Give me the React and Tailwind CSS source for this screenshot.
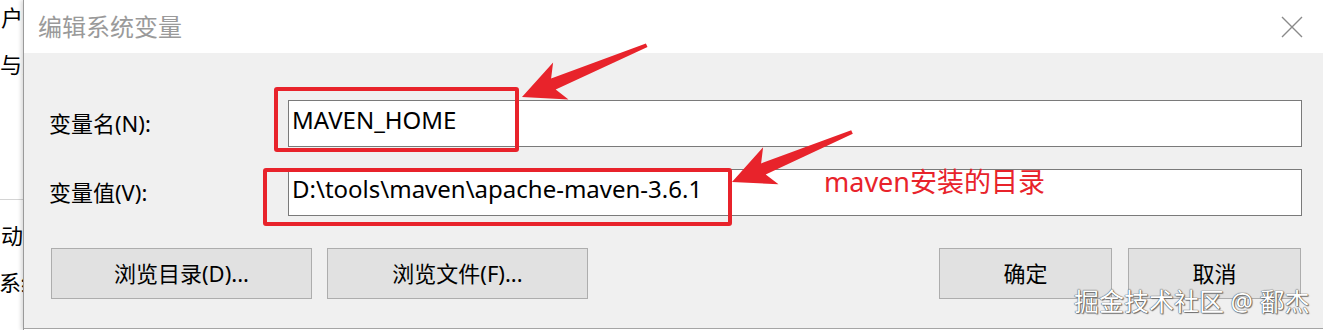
import React from 'react';

const FONT = '[font-family:"Noto_Sans","Noto_Sans_CJK_SC",sans-serif]';

function WinButton({ children, className = '' }) {
    return (
        <div className={`h-[51px] flex items-center justify-center bg-[#e1e1e1] border border-[#adadad] text-[22px] text-black ${className}`}>
            {children}
        </div>
    );
}

function Field({ label, value }) {
    return (
        <div className="flex items-center h-[47px]">
            <div className="w-[239px] shrink-0 text-[22px] text-black">{label}</div>
            <div className="flex-1 h-[47px] flex items-center bg-white border border-[#7a7a7a] pl-[3px] pb-[7px] text-[24px] text-black whitespace-nowrap">
                {value}
            </div>
        </div>
    );
}

export default function App() {
    return (
        <div className={`relative w-[1323px] h-[330px] flex overflow-hidden bg-white ${FONT}`}>
            {/* window behind the dialog */}
            <div className="w-[23px] shrink-0 flex flex-col overflow-hidden bg-white text-[22px] text-black leading-none">
                <div className="mt-[6px] flex justify-end whitespace-nowrap">用户</div>
                <div className="mt-[25px] whitespace-nowrap">与变量</div>
                <div className="mt-[124px] border-t border-[#d4d4d4]"></div>
                <div className="mt-[24px] flex justify-end whitespace-nowrap">启动</div>
                <div className="mt-[25px] whitespace-nowrap -ml-[1px]">系统</div>
            </div>

            {/* dialog */}
            <div className="flex-1 flex flex-col border-l border-[#9a9a9a] shadow-[-2px_0_4px_rgba(0,0,0,0.15)]">
                <div className="h-[53px] shrink-0 bg-white flex items-center justify-between pl-[14px] pr-[20px]">
                    <span className="text-[24px] text-[#9a9a9a]">编辑系统变量</span>
                    <svg width="22" height="22" viewBox="0 0 22 22">
                        <path d="M1 1 L21 21 M21 1 L1 21" stroke="#8a8a8a" strokeWidth="1.4" fill="none" />
                    </svg>
                </div>
                <div className="flex-1 bg-[#f0f0f0] pl-[25px] pr-[21px] pt-[47px] border-b border-[#a5a5a5] mb-[1px]">
                    <Field label="变量名(N):" value="MAVEN_HOME" />
                    <div className="mt-[22px]">
                        <Field label="变量值(V):" value="D:\tools\maven\apache-maven-3.6.1" />
                    </div>
                    <div className="mt-[32px] flex items-center">
                        <WinButton className="w-[261px] ml-[2px]">浏览目录(D)...</WinButton>
                        <WinButton className="w-[261px] ml-[15px]">浏览文件(F)...</WinButton>
                        <div className="flex-1"></div>
                        <WinButton className="w-[173px]">确定</WinButton>
                        <WinButton className="w-[173px] ml-[16px] mr-[1px]">取消</WinButton>
                    </div>
                </div>
            </div>

            {/* red annotations */}
            <div className="absolute left-[274px] top-[87px] w-[245px] h-[65px] border-[4px] border-[#e8232b] rounded-[3px]"></div>
            <div className="absolute left-[263px] top-[168px] w-[469px] h-[58px] border-[4px] border-[#e8232b] rounded-[3px]"></div>
            <svg className="absolute left-0 top-0 pointer-events-none" width="1323" height="330">
                <polygon
                    fill="#e8232b"
                    points="522,97 553.1,62.4 551.1,78.4 645.9,43.4 647.5,47 555.7,89.4 568.5,99.4"
                />
                <polygon
                    fill="#e8232b"
                    points="732,182 763.1,147.3 761.1,163.4 851.2,130.2 852.8,133.8 765.7,174.4 778.5,184.3"
                />
            </svg>
            <div className="absolute left-[824px] top-[163px] text-[27px] text-[#e8232b] leading-[38px] whitespace-nowrap">
                maven安装的目录
            </div>

            {/* watermark */}
            <div className="absolute left-[1074px] top-[285px] text-[25px] leading-[32px] text-white whitespace-nowrap [text-shadow:0_0_1px_#444,0_0_1px_#444,1px_1px_1px_#777]">
                掘金技术社区 @ 鄱杰
            </div>
        </div>
    );
}
